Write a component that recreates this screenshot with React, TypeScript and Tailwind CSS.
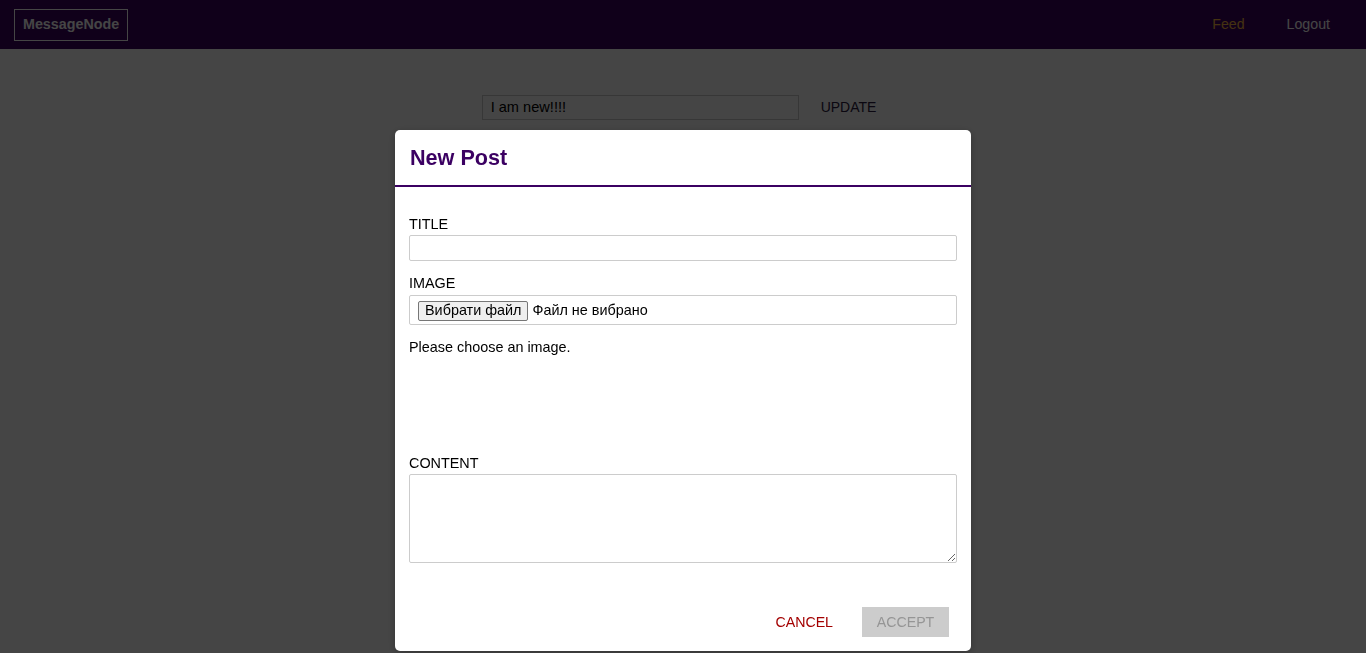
import React from "react";

export default function App() {
  return (
    <div className="relative min-h-[653px] bg-white font-['Liberation_Sans',Arial,sans-serif] text-black">
      <header className="h-[49px] bg-[#3b0062] flex items-center justify-between pl-[14px] pr-[36px]">
        <div className="h-[32px] px-[8px] border border-white flex items-center text-white text-[14.3px] font-bold">
          MessageNode
        </div>
        <nav className="flex items-center gap-[42px] text-[14.2px]">
          <span className="text-[#fab83f]">Feed</span>
          <span className="text-white">Logout</span>
        </nav>
      </header>

      <div className="flex justify-center pt-[46px]">
        <div className="w-[317px] h-[25px] border border-[#ccc] px-[8px] flex items-center text-[14.6px] text-black">
          I am new!!!!
        </div>
        <div className="ml-[10px] pl-[12px] pr-[8px] h-[25px] flex items-center text-[14px] text-[#2a1a40]">
          UPDATE
        </div>
      </div>

      <div className="fixed inset-0 bg-[rgba(0,0,0,0.73)] flex justify-center pt-[130px]">
        <div className="w-[576px] h-[521px] bg-white rounded-[5px] shadow-[0_2px_8px_rgba(0,0,0,0.26)] flex flex-col">
          <div className="h-[57px] flex items-center pl-[15px] border-b-2 border-[#3b0062]">
            <h1 className="text-[21.6px] font-bold text-[#3b0062] leading-none">New Post</h1>
          </div>
          <div className="px-[14px] pt-[29px] flex flex-col text-[14.4px]">
            <label className="block leading-[16px] mb-[3px] text-black">TITLE</label>
            <div className="h-[26px] border border-[#ccc] rounded-[2px]"></div>

            <label className="block mt-[14px] leading-[16px] mb-[4px] text-black">IMAGE</label>
            <div className="h-[30px] border border-[#ccc] rounded-[2px] flex items-center pl-[8px] pt-[1px]">
              <span className="h-[20px] px-[6px] flex items-center bg-[#efefef] border border-[#767676] rounded-[2px] text-black">
                Вибрати файл
              </span>
              <span className="ml-[4px] text-black">Файл не вибрано</span>
            </div>

            <p className="mt-[14px] leading-[16px] text-black">Please choose an image.</p>

            <div className="h-[100px]"></div>

            <label className="block leading-[16px] mb-[3px] text-black">CONTENT</label>
            <textarea className="h-[89px] w-full border border-[#ccc] rounded-[2px] outline-none" />

            <div className="mt-[44px] flex justify-end items-center gap-[14px] pr-[8px] text-[14.2px]">
              <span className="h-[30px] px-[15px] pt-[1px] flex items-center text-[#a30000]">CANCEL</span>
              <span className="h-[30px] w-[87px] pt-[1px] flex items-center justify-center bg-[#ccc] text-[#959595]">ACCEPT</span>
            </div>
          </div>
        </div>
      </div>
    </div>
  );
}
